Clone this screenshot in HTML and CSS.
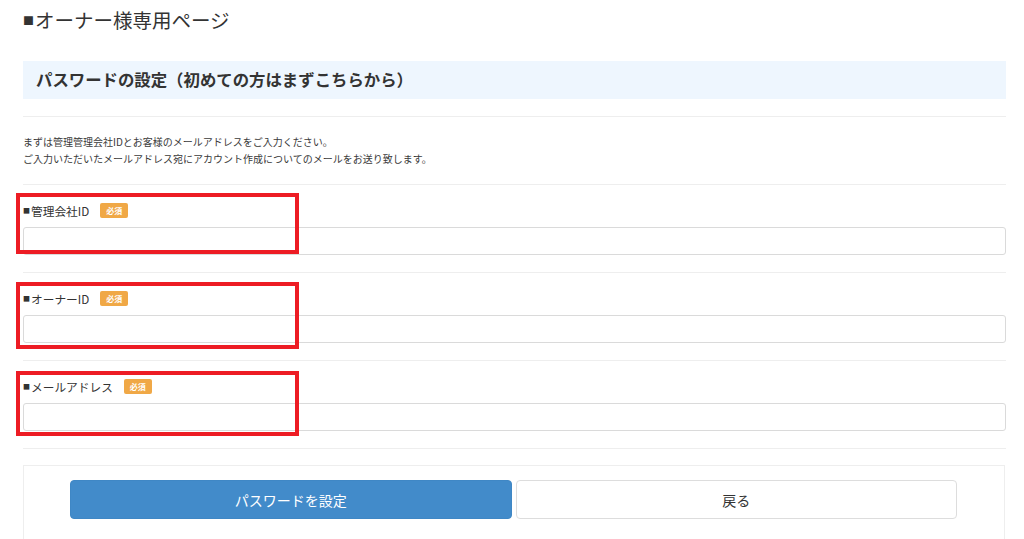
FILE: index.html
```html
<!DOCTYPE html>
<html lang="ja">
<head>
<meta charset="utf-8">
<title>オーナー様専用ページ</title>
<link rel="stylesheet" href="styles.css">
</head>
<body>
<div class="page">
  <h1 class="title"><span class="sq">■</span>オーナー様専用ページ</h1>
  <h2 class="section-head">パスワードの設定（初めての方はまずこちらから）</h2>
  <div class="desc">
    <p>まずは管理管理会社IDとお客様のメールアドレスをご入力ください。</p>
    <p>ご入力いただいたメールアドレス宛にアカウント作成についてのメールをお送り致します。</p>
  </div>
  <div class="field">
    <div class="label"><span class="lsq">■</span>管理会社ID<span class="badge">必須</span></div>
    <input class="input" type="text">
    <div class="mark mark1"></div>
  </div>
  <div class="field">
    <div class="label"><span class="lsq">■</span>オーナーID<span class="badge">必須</span></div>
    <input class="input" type="text">
    <div class="mark mark2"></div>
  </div>
  <div class="field last">
    <div class="label"><span class="lsq">■</span>メールアドレス<span class="badge">必須</span></div>
    <input class="input" type="text">
    <div class="mark mark3"></div>
  </div>
  <div class="panel">
    <button class="btn btn-primary" type="button">パスワードを設定</button>
    <button class="btn btn-default" type="button">戻る</button>
  </div>
</div>
</body>
</html>
```
FILE: styles.css
```css
html, body {
  margin: 0;
  padding: 0;
  background: #fff;
}
body {
  font-family: "Noto Sans CJK JP", "Noto Sans", sans-serif;
  color: #333;
  overflow: hidden;
}
.page {
  padding: 0 18px 0 23px;
}
.title {
  margin: 0;
  padding-top: 6px;
  font-size: 19.5px;
  line-height: 28px;
  font-weight: 400;
  color: #333;
}
.sq {
  font-size: 11px;
  vertical-align: 3px;
  margin-right: 1px;
}
.section-head {
  margin: 27px 0 0;
  height: 38px;
  line-height: 36px;
  padding-left: 13px;
  background: #eef6fe;
  font-size: 16.4px;
  font-weight: 700;
  color: #333;
  letter-spacing: 0;
}
.desc {
  margin-top: 17px;
  border-top: 1px solid #eee;
  padding: 16px 0 17px;
  font-size: 10px;
  line-height: 17px;
  color: #3a3a3a;
}
.desc p {
  margin: 0;
}
.field {
  position: relative;
  border-top: 1px solid #eee;
  padding: 17px 0 17px;
  display: flex;
  flex-direction: column;
}
.field.last {
  border-bottom: 1px solid #eee;
}
.label {
  font-size: 11.7px;
  line-height: 17px;
  height: 17px;
  display: flex;
  align-items: center;
  color: #333;
}
.lsq {
  font-size: 7px;
  margin-right: 1px;
}
.badge {
  display: inline-block;
  margin-left: 11px;
  width: 28px;
  height: 15px;
  line-height: 15px;
  text-align: center;
  background: #f0a846;
  color: #fff;
  font-size: 8px;
  font-weight: 700;
  border-radius: 2px;
}
.input {
  margin: 8px 0 0;
  box-sizing: border-box;
  width: 100%;
  height: 28px;
  border: 1px solid #dadada;
  border-radius: 3px;
  background: #fff;
  padding: 0 8px;
  font-family: inherit;
}
.mark {
  position: absolute;
  left: -7px;
  width: 283px;
  box-sizing: border-box;
  border: 4px solid #ed1c24;
  pointer-events: none;
}
.mark1 { top: 8px; height: 61px; }
.mark2 { top: 9px; height: 67px; }
.mark3 { top: 10px; height: 65px; }
.panel {
  margin-top: 16px;
  margin-right: 1px;
  border: 1px solid #eee;
  padding: 14px 47px 30px 46px;
  display: flex;
  gap: 4px;
}
.btn {
  flex: 1;
  height: 39px;
  border-radius: 4px;
  font-family: "Noto Sans CJK JP", sans-serif;
  font-size: 14px;
  cursor: pointer;
}
.btn-primary {
  background: #428bca;
  border: 1px solid #3f87c5;
  color: #fff;
}
.btn-default {
  background: #fff;
  border: 1px solid #ddd;
  color: #333;
}
```
